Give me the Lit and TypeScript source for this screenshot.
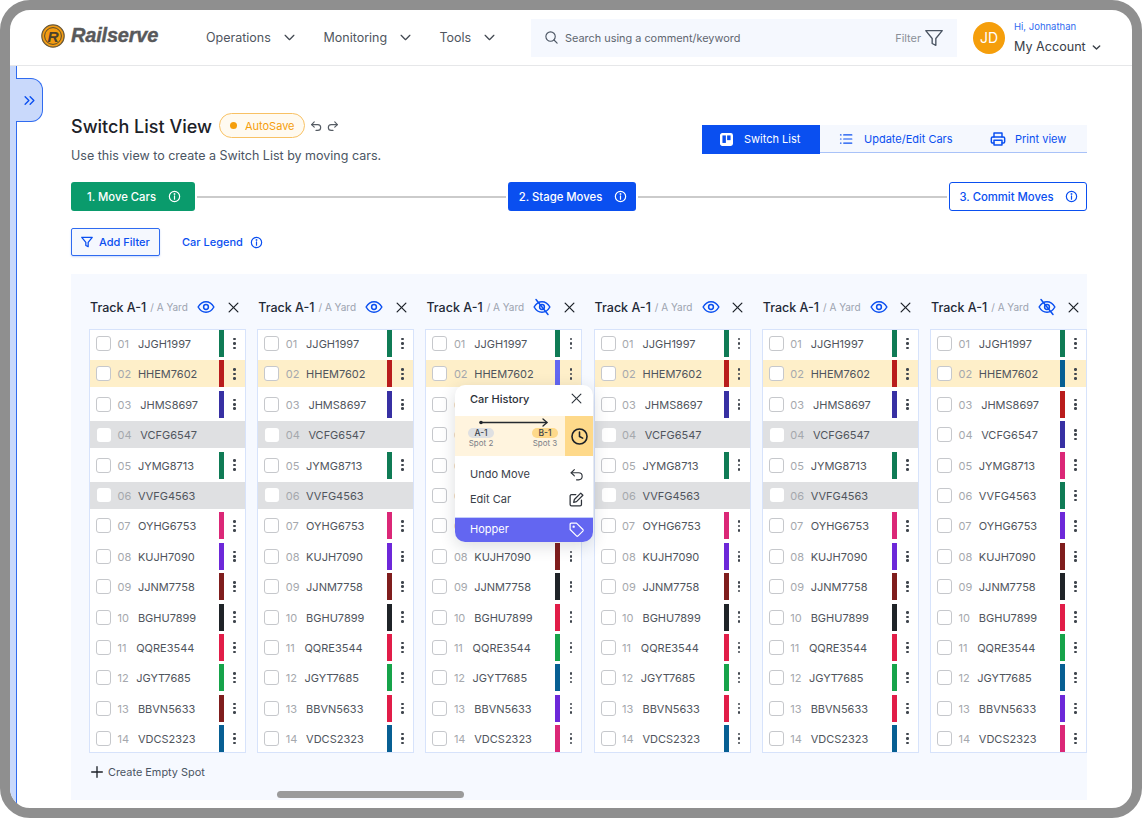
import { LitElement, html, css, svg } from 'lit';
import { customElement } from 'lit/decorators.js';

const G = '#0f7b55', R = '#b91c1c', I = '#3730a3', P = '#db2777', V = '#6d28d9',
  D = '#7f1d1d', K = '#1f2328', O = '#e11d48', E = '#16a34a', B = '#075f93', L = '#6366f1';

// code text sits a little off for a few rows in the source design
const cars: [string, string][] = [
  ['01', 'JJGH1997'], ['02', 'HHEM7602'], ['03', 'JHMS8697'], ['04', 'VCFG6547'],
  ['05', 'JYMG8713'], ['06', 'VVFG4563'], ['07', 'OYHG6753'], ['08', 'KUJH7090'],
  ['09', 'JJNM7758'], ['10', 'BGHU7899'], ['11', 'QQRE3544'], ['12', 'JGYT7685'],
  ['13', 'BBVN5633'], ['14', 'VDCS2323'],
];
const shifted: Record<string, string> = { '03': 'right', '04': 'right', '11': 'left', '12': 'left' };

const plain = [G, R, I, '', G, '', P, V, D, K, O, E, O, B];
const second = [G, R, I, '', G, '', P, V, D, K, O, E, D, B];
const third = [G, L, R, I, P, G, V, D, K, O, E, B, V, P];
const sixth = [G, B, R, I, P, G, V, D, K, O, E, B, V, P];

const tracks = [
  { bars: second, hidden: false },
  { bars: plain, hidden: false },
  { bars: third, hidden: true },
  { bars: plain, hidden: false },
  { bars: plain, hidden: false },
  { bars: sixth, hidden: true },
];

const icon = (size: number, body: unknown, sw = 1.8) => html`<svg class="ico" width=${size} height=${size} viewBox="0 0 24 24" fill="none" stroke="currentColor" stroke-width=${sw} stroke-linecap="round" stroke-linejoin="round">${body}</svg>`;

const chevron = svg`<polyline points="5,8.5 12,15.5 19,8.5"/>`;
const info = svg`<circle cx="12" cy="12" r="9.5"/><line x1="12" y1="11" x2="12" y2="17"/><circle cx="12" cy="7.3" r="0.6"/>`;
const funnel = svg`<path d="M3 4h18l-7 8.5V20l-4 -2v-5.5z"/>`;
const close = svg`<line x1="5" y1="5" x2="19" y2="19"/><line x1="19" y1="5" x2="5" y2="19"/>`;
const undo = svg`<path d="M9 5 4.5 9.5 9 14"/><path d="M4.5 9.5H15a5 5 0 0 1 0 10h-3"/>`;
const redo = svg`<path d="M15 5l4.5 4.5L15 14"/><path d="M19.5 9.5H9a5 5 0 0 0 0 10h3"/>`;
const eye = svg`<path d="M1.5 12S5.5 5 12 5s10.5 7 10.5 7-4 7-10.5 7S1.5 12 1.5 12z"/><circle cx="12" cy="12" r="3.2"/>`;
const eyeOff = svg`<path d="M1.5 12S5.5 5 12 5s10.5 7 10.5 7-4 7-10.5 7S1.5 12 1.5 12z"/><circle cx="12" cy="12" r="3.2"/><line x1="4" y1="2" x2="20" y2="22"/>`;

@customElement('app-root')
export class AppRoot extends LitElement {
  static styles = css`
    :host { display: block; width: 1142px; height: 818px; font-family: Inter, 'Noto Sans', sans-serif; color: #1f2937; background: #fff; }
    * { box-sizing: border-box; }
    .ico { display: block; flex: none; }
    .frame { position: relative; width: 1142px; height: 818px; border: 10px solid #8f8f8f; border-radius: 30px; background: #fff; overflow: hidden; display: flex; flex-direction: column; }

    .topbar { height: 56px; flex: none; border-bottom: 1px solid #e6e7e9; display: flex; align-items: center; padding: 0 31px; }
    .logo { display: flex; align-items: center; width: 165px; flex: none; margin-top: -4px; }
    .logo-name { font-family: 'Liberation Sans', sans-serif; font-weight: 700; font-style: italic; font-size: 20px; letter-spacing: -0.2px; color: #58595b; -webkit-text-stroke: 0.4px #58595b; margin-left: 6px; }
    .nav { display: flex; align-items: center; width: 325px; flex: none; font-size: 12.5px; color: #4f5660; margin-top: -1px; }
    .nav-item { display: flex; align-items: center; }
    .nav-item .ico { margin-left: 11px; color: #454b54; }
    .nav-item.a { width: 117.5px; }
    .nav-item.b { width: 116px; }
    .search { width: 426px; height: 38px; flex: none; background: #f5f8fe; display: flex; align-items: center; padding: 0 13px; font-size: 10.9px; color: #5f6670; }
    .search .ico { color: #4b5563; }
    .search-text { margin-left: 6px; flex: 1; }
    .search-filter { color: #8b9098; margin-right: 2px; }
    .search-funnel { color: #4b5563; margin-right: -1px; }
    .account { display: flex; align-items: center; margin-left: 16px; flex: none; }
    .avatar { width: 32px; height: 32px; border-radius: 50%; background: #f59e0b; color: #fff; font-size: 14px; display: flex; align-items: center; justify-content: center; }
    .who { margin-left: 9px; margin-top: 1px; white-space: nowrap; }
    .hi { font-size: 9.5px; color: #2f6bf0; line-height: 12px; margin-bottom: 6px; }
    .my { font-size: 12.6px; color: #3a4048; line-height: 16px; display: flex; align-items: center; gap: 5px; }

    .body { flex: 1; display: flex; min-height: 0; }
    .strip { width: 7px; flex: none; background: #c9d9fb; border-right: 1.5px solid #2f6bf0; }
    .toggle { position: absolute; left: 6px; top: 68px; width: 27px; height: 44px; background: #c9d9fb; border: 1px solid #2f6bf0; border-left: none; border-radius: 0 12px 12px 0; color: #0a4ff0; display: flex; align-items: center; justify-content: center; }
    .main { flex: 1; padding: 47px 45px 8px 54px; min-width: 0; }

    .head { display: flex; justify-content: space-between; align-items: flex-start; height: 69px; }
    .title-row { display: flex; align-items: center; height: 25px; }
    h1 { margin: 1px 0 0; font-size: 18px; font-weight: 500; color: #1c2128; line-height: 25px; }
    .pill { margin-left: 7px; height: 25px; width: 86px; border: 1px solid #f8c164; border-radius: 13px; background: #fffaf0; color: #f59e0b; font-size: 11px; display: flex; align-items: center; padding-left: 10px; }
    .pill i { width: 7px; height: 7px; border-radius: 50%; background: #f59e0b; margin-right: 8px; }
    .hist { display: flex; gap: 3px; margin-left: 4px; color: #565c64; }
    .sub { margin: 6px 0 0; font-size: 12.5px; line-height: 24px; color: #4b5563; }
    .tabs { display: flex; margin-top: 12px; width: 385px; height: 28px; background: #f5f8fe; border-bottom: 1.5px solid #a9c2f8; font-size: 11px; color: #0a4ff0; }
    .tab { display: flex; align-items: center; }
    .tab.on { width: 118px; background: #0a4ff0; color: #fff; padding-left: 17px; gap: 10px; margin-bottom: -1.5px; }
    .tab.mid { width: 154px; padding-left: 19px; gap: 11px; }
    .tab.end { padding-left: 16px; gap: 9px; }

    .steps { display: flex; align-items: center; height: 29px; }
    .step { height: 29px; border-radius: 3px; display: flex; align-items: center; justify-content: center; gap: 12px; padding-left: 2px; font-size: 11.3px; font-weight: 500; flex: none; }
    .step.one { width: 124px; background: #0a9b6c; color: #fff; }
    .step.two { width: 128px; background: #0a4ff0; color: #fff; }
    .step.three { width: 138px; background: #fff; color: #0a4ff0; border: 1px solid #0a4ff0; }
    .link { flex: 1; height: 2px; background: #cbcbcb; margin: 0 2px; }

    .tools { display: flex; align-items: center; margin-top: 17px; height: 28px; }
    .add { width: 89px; height: 28px; border: 1px solid #2f6bf0; border-radius: 2px; background: #f5f8fe; color: #0a4ff0; font-size: 11px; font-weight: 500; display: flex; align-items: center; padding-left: 8px; gap: 5px; box-shadow: 0 1px 2px rgba(47,107,240,.25); }
    .legend { display: flex; align-items: center; margin-left: 22px; gap: 7px; color: #0a4ff0; font-size: 11px; font-weight: 500; }

    .panel { position: relative; margin-top: 18px; height: 526px; background: #f6f9ff; padding: 21px 0 0 18px; }
    .columns { display: flex; gap: 11.2px; overflow: hidden; }
    .col { width: 157px; flex: none; }
    .col-head { height: 24px; margin-bottom: 10px; display: flex; align-items: center; padding-left: 1px; }
    .track { font-size: 12.5px; font-weight: 500; color: #1f2937; }
    .yard { font-size: 10px; color: #9ca3af; margin-left: 4px; flex: 1; }
    .eye { color: #0a4ff0; margin-right: 10.5px; }
    .x { color: #1c2128; margin-right: 5.5px; }
    .card { border: 1px solid #d7e3fb; background: #fff; display: grid; grid-auto-rows: 27px; row-gap: 3.4px; }
    .row { display: flex; align-items: center; padding-left: 6px; font-size: 11px; color: #50555d; }
    .row.hl { background: #feefc9; }
    .row.off { background: #dfe0e2; }
    .box { width: 15px; height: 15px; flex: none; border: 1.2px solid #c6c8cc; border-radius: 3px; background: #fff; margin-right: 6.5px; }
    .row.off .box { border-color: transparent; width: 14px; height: 14px; margin-left: 1px; margin-right: 6.5px; }
    .num { width: 20.4px; flex: none; color: #a5a8ad; padding-top: 1px; }
    .code { flex: 1; white-space: nowrap; padding-top: 1px; }
    .code.right { padding-left: 2.3px; }
    .code.left { margin-left: -1.7px; }
    .bar { width: 5px; height: 27px; flex: none; }
    .kebab { width: 21px; flex: none; display: flex; flex-direction: column; align-items: center; gap: 1.8px; }
    .kebab i { width: 2.6px; height: 2.6px; border-radius: 50%; background: #3f454d; }

    .create { display: flex; align-items: center; gap: 3px; margin-top: 11px; height: 16px; font-size: 10.9px; color: #4b5563; }
    .create .ico { color: #1c2128; }
    .thumb { width: 187px; height: 7px; margin: 11px 0 0 188px; background: #9b9b9b; border-radius: 4px; }

    .pop { position: absolute; left: 384px; top: 111px; width: 138px; height: 157px; background: #fff; border-radius: 10px; box-shadow: 0 4px 16px rgba(31,41,55,.16); display: flex; flex-direction: column; overflow: hidden; font-size: 11px; color: #3a4048; }
    .pop-head { height: 31px; flex: none; display: flex; align-items: center; justify-content: space-between; padding: 0 9px 4px 15px; font-weight: 500; color: #2a3038; }
    .band { height: 40px; flex: none; display: flex; background: #fff4de; }
    .route { flex: 1; padding: 0 7px 0 13px; }
    .arrow { display: block; margin: 2px 0 1px 10px; color: #24292f; }
    .stops { display: flex; justify-content: space-between; }
    .stop { display: flex; flex-direction: column; align-items: center; width: 26px; }
    .chip { width: 26px; height: 10px; line-height: 10px; border-radius: 5px; text-align: center; font-size: 8.5px; font-weight: 500; background: #dfe0e2; color: #3a4048; }
    .chip.to { background: #fed98a; }
    .spot { font-size: 8px; line-height: 10px; color: #7b8088; white-space: nowrap; }
    .clock { width: 28px; flex: none; background: #fed98a; display: flex; align-items: center; justify-content: center; color: #1c2128; }
    .items { flex: 1; padding-top: 5.5px; display: flex; flex-direction: column; }
    .item { height: 25px; flex: none; display: flex; align-items: center; justify-content: space-between; padding: 0 8px 0 15px; }
    .item .ico { color: #2f343b; }
    .item.active { margin-top: auto; height: 25.5px; background: #6366f1; color: #fff; border-top: 1px solid #c3cdfb; padding-bottom: 1px; }
    .item.active .ico { color: #fff; }
  `;

  private renderRow(car: [string, string], bar: string, i: number) {
    const [num, code] = car;
    const cls = i === 1 ? 'row hl' : bar ? 'row' : 'row off';
    return html`<div class=${cls}>
      <span class="box"></span>
      <span class="num">${num}</span>
      <span class="code ${shifted[num] ?? ''}">${code}</span>
      ${bar ? html`<span class="bar" style="background:${bar}"></span><span class="kebab"><i></i><i></i><i></i></span>` : ''}
    </div>`;
  }

  private renderTrack(t: { bars: string[]; hidden: boolean }) {
    return html`<section class="col">
      <div class="col-head">
        <span class="track">Track A-1</span><span class="yard">/ A Yard</span>
        <span class="eye">${icon(18, t.hidden ? eyeOff : eye, 2)}</span>
        <span class="x">${icon(15, close, 2)}</span>
      </div>
      <div class="card">${cars.map((c, i) => this.renderRow(c, t.bars[i], i))}</div>
    </section>`;
  }

  render() {
    return html`<div class="frame">
      <header class="topbar">
        <div class="logo">
          <svg width="24" height="24" viewBox="0 0 24 24">
            <circle cx="12" cy="12" r="11.2" fill="#f39c12" stroke="#6b5a3c" stroke-width="1.2"/>
            <circle cx="12" cy="12" r="8.4" fill="none" stroke="#5a4a2c" stroke-width="1"/>
            <text x="12" y="17.5" text-anchor="middle" font-family="Liberation Sans" font-weight="700" font-style="italic" font-size="15.5" fill="#4a3f2c">R</text>
          </svg>
          <span class="logo-name">Railserve</span>
        </div>
        <nav class="nav">
          <div class="nav-item a">Operations ${icon(15, chevron, 2)}</div>
          <div class="nav-item b">Monitoring ${icon(15, chevron, 2)}</div>
          <div class="nav-item">Tools ${icon(15, chevron, 2)}</div>
        </nav>
        <div class="search">
          ${icon(15, svg`<circle cx="10.5" cy="10.5" r="7.5"/><line x1="16" y1="16" x2="21" y2="21"/>`)}
          <span class="search-text">Search using a comment/keyword</span>
          <span class="search-filter">Filter</span>
          <span class="search-funnel">${icon(22, funnel, 1.5)}</span>
        </div>
        <div class="account">
          <div class="avatar">JD</div>
          <div class="who">
            <div class="hi">Hi, Johnathan</div>
            <div class="my">My Account ${icon(11, chevron, 3)}</div>
          </div>
        </div>
      </header>
      <div class="body">
        <div class="strip"></div>
        <div class="toggle">${icon(15, svg`<polyline points="5,6 11,12 5,18"/><polyline points="13,6 19,12 13,18"/>`, 2.2)}</div>
        <main class="main">
          <div class="head">
            <div>
              <div class="title-row">
                <h1>Switch List View</h1>
                <div class="pill"><i></i>AutoSave</div>
                <div class="hist">${icon(14, undo, 2)}${icon(14, redo, 2)}</div>
              </div>
              <p class="sub">Use this view to create a Switch List by moving cars.</p>
            </div>
            <div class="tabs">
              <div class="tab on">
                ${icon(15, svg`<rect x="2.5" y="2.5" width="19" height="19" rx="3" fill="#fff" stroke="#fff"/><rect x="5.5" y="5.5" width="5.5" height="12" fill="#0a4ff0" stroke="none"/><rect x="13" y="5.5" width="5.5" height="7.5" fill="#0a4ff0" stroke="none"/>`)}
                Switch List
              </div>
              <div class="tab mid">
                ${icon(14, svg`<line x1="8" y1="5" x2="22" y2="5"/><line x1="8" y1="12" x2="22" y2="12"/><line x1="8" y1="19" x2="22" y2="19"/><line x1="2.5" y1="5" x2="3.5" y2="5"/><line x1="2.5" y1="12" x2="3.5" y2="12"/><line x1="2.5" y1="19" x2="3.5" y2="19"/>`, 2)}
                Update/Edit Cars
              </div>
              <div class="tab end">
                ${icon(16, svg`<path d="M6 9V3h12v6"/><path d="M6 18H4a2 2 0 0 1-2-2v-5a2 2 0 0 1 2-2h16a2 2 0 0 1 2 2v5a2 2 0 0 1-2 2h-2"/><rect x="6" y="14" width="12" height="7"/>`, 2.2)}
                Print view
              </div>
            </div>
          </div>

          <div class="steps">
            <div class="step one">1. Move Cars ${icon(13, info, 2.2)}</div>
            <div class="link"></div>
            <div class="step two">2. Stage Moves ${icon(13, info, 2.2)}</div>
            <div class="link"></div>
            <div class="step three">3. Commit Moves ${icon(13, info, 2.2)}</div>
          </div>

          <div class="tools">
            <div class="add">${icon(14, funnel, 2.2)}Add Filter</div>
            <div class="legend">Car Legend ${icon(13, info, 2.2)}</div>
          </div>

          <div class="panel">
            <div class="columns">${tracks.map((t) => this.renderTrack(t))}</div>
            <div class="create">${icon(16, svg`<line x1="12" y1="4" x2="12" y2="20"/><line x1="4" y1="12" x2="20" y2="12"/>`, 2)}Create Empty Spot</div>
            <div class="thumb"></div>

            <div class="pop">
              <div class="pop-head">Car History ${icon(15, close, 1.8)}</div>
              <div class="band">
                <div class="route">
                  <svg class="arrow" width="70" height="9" viewBox="0 0 70 9" fill="none" stroke="currentColor" stroke-width="1.3" stroke-linecap="round" stroke-linejoin="round">
                    <circle cx="3" cy="4.5" r="1.8" fill="currentColor" stroke="none"/>
                    <line x1="3" y1="4.5" x2="69" y2="4.5"/>
                    <polyline points="65,1 69,4.5 65,8"/>
                  </svg>
                  <div class="stops">
                    <div class="stop"><span class="chip">A-1</span><span class="spot">Spot 2</span></div>
                    <div class="stop"><span class="chip to">B-1</span><span class="spot">Spot 3</span></div>
                  </div>
                </div>
                <div class="clock">${icon(19, svg`<circle cx="12" cy="12" r="9.5"/><polyline points="12,6.5 12,12 16,14"/>`, 2)}</div>
              </div>
              <div class="items">
                <div class="item">Undo Move ${icon(17, undo, 1.6)}</div>
                <div class="item">Edit Car ${icon(17, svg`<path d="M11 5H5a2 2 0 0 0-2 2v12a2 2 0 0 0 2 2h12a2 2 0 0 0 2-2v-6"/><path d="M18 3l3 3-9 9-4 1 1-4z"/>`, 1.8)}</div>
                <div class="item active">Hopper ${icon(17, svg`<path d="M3 4.5 A1.5 1.5 0 0 1 4.5 3H12l9 9a1.6 1.6 0 0 1 0 2.2l-6.8 6.8a1.6 1.6 0 0 1-2.2 0L3 12z"/><circle cx="8" cy="8" r="0.8"/>`, 1.7)}</div>
              </div>
            </div>
          </div>
        </main>
      </div>
    </div>`;
  }
}
